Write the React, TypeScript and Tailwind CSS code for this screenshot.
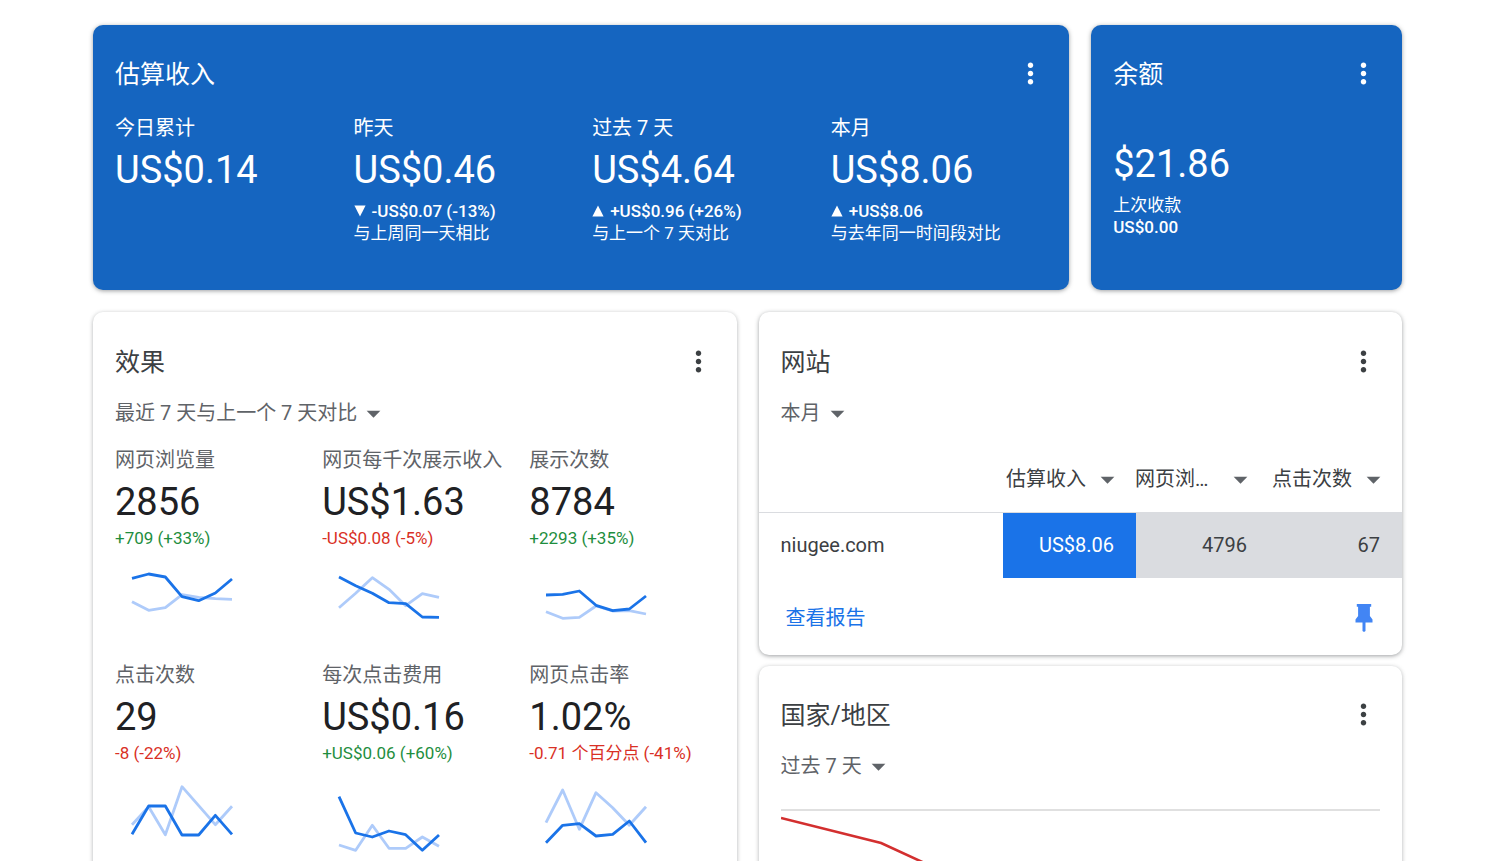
// src/App.tsx
import React, { useState } from 'react';
import { MdArrowDropDown, MdMoreVert } from 'react-icons/md';

interface Earning {
  label: string;
  value: string;
  trend?: 'up' | 'down';
  delta?: string;
  note?: string;
}

interface Metric {
  label: string;
  value: string;
  delta: string;
  good: boolean;
  current: number[];
  previous: number[];
}

const earnings: Earning[] = [
  { label: '今日累计', value: 'US$0.14' },
  { label: '昨天', value: 'US$0.46', trend: 'down', delta: '-US$0.07 (-13%)', note: '与上周同一天相比' },
  { label: '过去 7 天', value: 'US$4.64', trend: 'up', delta: '+US$0.96 (+26%)', note: '与上一个 7 天对比' },
  { label: '本月', value: 'US$8.06', trend: 'up', delta: '+US$8.06', note: '与去年同一时间段对比' },
];

const metrics: Metric[] = [
  { label: '网页浏览量', value: '2856', delta: '+709 (+33%)', good: true, current: [18.3, 14, 17, 36.7, 40.7, 33, 19], previous: [41.7, 50.3, 47.7, 34.7, 37.3, 38.7, 39.3] },
  { label: '网页每千次展示收入', value: 'US$1.63', delta: '-US$0.08 (-5%)', good: false, current: [17, 25.7, 33.3, 42.7, 43.7, 57, 57.3], previous: [47.7, 33.3, 17.7, 29.3, 45.7, 33.7, 37.3] },
  { label: '展示次数', value: '8784', delta: '+2293 (+35%)', good: true, current: [35, 34.3, 31, 45.3, 50.7, 49, 36], previous: [51.7, 58.3, 57.3, 46, 51, 50.7, 54] },
  { label: '点击次数', value: '29', delta: '-8 (-22%)', good: false, current: [59.3, 31, 31, 60, 60, 40.3, 59.3], previous: [49.7, 31.7, 59.7, 11.7, 30.7, 49.7, 31.3] },
  { label: '每次点击费用', value: 'US$0.16', delta: '+US$0.06 (+60%)', good: true, current: [21.7, 58, 62, 56, 59.7, 75.3, 60], previous: [70, 75.3, 50.3, 73.3, 73.3, 62, 71.3] },
  { label: '网页点击率', value: '1.02%', delta: '-0.71 个百分点 (-41%)', good: false, current: [67.7, 50.3, 48.7, 61, 59.3, 46, 67.7], previous: [47.7, 15, 54.3, 17.7, 32.7, 50.3, 31.7] },
];

const columns = ['估算收入', '网页浏览量', '点击次数'];

const toPoints = (values: number[]) =>
  values.map((y, i) => `${2 + (i * 100) / 6},${y}`).join(' ');

const Sparkline: React.FC<{ current: number[]; previous: number[] }> = ({ current, previous }) => (
  <svg width="104" height="80" viewBox="0 0 104 80" fill="none" strokeWidth="2.8" strokeLinejoin="round" aria-hidden="true">
    <polyline points={toPoints(previous)} stroke="#aecbfa" />
    <polyline points={toPoints(current)} stroke="#1a73e8" />
  </svg>
);

const CardHeader: React.FC<{ title: string }> = ({ title }) => (
  <div className="flex items-start justify-between pr-[22px]">
    <h2 className="text-[25px] leading-9">{title}</h2>
    <button type="button" aria-label={`${title} 菜单`} className="cursor-pointer">
      <MdMoreVert size={33} />
    </button>
  </div>
);

const Dropdown: React.FC<{ label: string; options: string[] }> = ({ label, options }) => {
  const [value, setValue] = useState(options[0]);
  return (
    <div className="relative inline-flex items-center text-[#5f6368]">
      <select
        aria-label={label}
        value={value}
        onChange={(e) => setValue(e.target.value)}
        className="h-6 cursor-pointer appearance-none bg-transparent pr-[33px] text-[20px] leading-6 [field-sizing:content]"
      >
        {options.map((option) => (
          <option key={option}>{option}</option>
        ))}
      </select>
      <MdArrowDropDown size={33} className="pointer-events-none absolute right-0" />
    </div>
  );
};

const ColumnSelect: React.FC<{ initial: string }> = ({ initial }) => {
  const [value, setValue] = useState(initial);
  return (
    <div className="relative flex items-center justify-end">
      <select
        aria-label="指标"
        value={value}
        onChange={(e) => setValue(e.target.value)}
        className="h-6 max-w-[122px] cursor-pointer appearance-none truncate bg-transparent pr-[38px] text-[20px] leading-6 [field-sizing:content]"
      >
        {columns.map((option) => (
          <option key={option}>{option}</option>
        ))}
      </select>
      <MdArrowDropDown size={33} className="pointer-events-none absolute right-0 text-[#5f6368]" />
    </div>
  );
};

const App: React.FC = () => {
  return (
    <div
      lang="zh-CN"
      className="h-screen overflow-y-auto bg-white pt-[25px] pr-[98px] pb-8 pl-[93px] font-['Roboto','Noto_Sans_CJK_SC',sans-serif] text-[#3c4043] [scrollbar-width:none]"
    >
      <div className="grid grid-cols-4 gap-[22px]">
        {/* Estimated earnings */}
        <section className="col-span-3 rounded-[10px] bg-[#1565c0] pt-8 pb-[46px] pl-[22px] text-white shadow-[0_1px_4px_rgba(60,64,67,0.5)]">
          <CardHeader title="估算收入" />
          <div className="mt-[23px] grid grid-cols-4">
            {earnings.map((item) => (
              <div key={item.label}>
                <div className="text-[20px] leading-6">{item.label}</div>
                <div className="mt-1.5 text-[38px] leading-[48px]">{item.value}</div>
                {item.delta && (
                  <div className="mt-1.5 text-[17px] leading-[22px]">
                    <div className="flex items-center gap-1.5 font-medium">
                      <svg width="12" height="12" viewBox="0 0 12 12" fill="currentColor" aria-hidden="true">
                        <path d={item.trend === 'up' ? 'M6 0.5l5.6 11H0.4z' : 'M0.4 0.5h11.2L6 11.5z'} />
                      </svg>
                      <span>{item.delta}</span>
                    </div>
                    <div>{item.note}</div>
                  </div>
                )}
              </div>
            ))}
          </div>
        </section>

        {/* Balance */}
        <section className="rounded-[10px] bg-[#1565c0] pt-8 pl-[22px] text-white shadow-[0_1px_4px_rgba(60,64,67,0.5)]">
          <CardHeader title="余额" />
          <div className="mt-[47px] text-[38px] leading-[48px]">$21.86</div>
          <div className="mt-1.5 text-[17px] leading-[22px]">
            <div>上次收款</div>
            <div className="font-medium">US$0.00</div>
          </div>
        </section>

        {/* Performance */}
        <section className="col-span-2 rounded-[10px] bg-white pt-[33px] pb-10 pl-[22px] shadow-[0_1px_4px_rgba(60,64,67,0.4)]">
          <CardHeader title="效果" />
          <div className="mt-5 flex">
            <Dropdown label="效果时间段" options={['最近 7 天与上一个 7 天对比', '本月']} />
          </div>
          <div className="mt-[23px] grid grid-cols-3 gap-y-[23px]">
            {metrics.map((metric) => (
              <div key={metric.label}>
                <div className="text-[20px] leading-6 whitespace-nowrap text-[#5f6368]">{metric.label}</div>
                <div className="mt-1.5 text-[38px] leading-[48px] text-[#202124]">{metric.value}</div>
                <div className={`text-[17px] leading-6 ${metric.good ? 'text-[#1e8e3e]' : 'text-[#d93025]'}`}>
                  {metric.delta}
                </div>
                <div className="mt-2.5 pl-[15px]">
                  <Sparkline current={metric.current} previous={metric.previous} />
                </div>
              </div>
            ))}
          </div>
        </section>

        <div className="col-span-2 flex flex-col gap-[11px]">
          {/* Sites */}
          <section className="rounded-[10px] bg-white pt-[33px] pb-5 shadow-[0_1px_4px_rgba(60,64,67,0.5)]">
            <div className="pl-[22px]">
              <CardHeader title="网站" />
              <div className="mt-5 flex">
                <Dropdown label="网站时间段" options={['本月', '过去 7 天']} />
              </div>
            </div>
            <table className="mt-[22px] w-full table-fixed border-collapse text-[20px] leading-6">
              <thead>
                <tr className="h-[65px] border-b border-[#dadce0]">
                  <td />
                  {columns.map((column) => (
                    <th key={column} scope="col" className="w-[133px] pr-3 font-normal">
                      <ColumnSelect initial={column} />
                    </th>
                  ))}
                </tr>
              </thead>
              <tbody>
                <tr className="h-[66px] text-right">
                  <th scope="row" className="pl-[22px] text-left font-normal">niugee.com</th>
                  <td className="bg-[#1a73e8] pr-[22px] text-white">US$8.06</td>
                  <td className="bg-[#dadce0] pr-[22px]">4796</td>
                  <td className="bg-[#dadce0] pr-[22px]">67</td>
                </tr>
              </tbody>
            </table>
            <div className="mt-[23px] flex items-center justify-between pr-[22px] pl-[27px]">
              <a href="#report" className="text-[20px] leading-6 text-[#1a73e8]">查看报告</a>
              <button type="button" aria-label="固定" className="flex w-[33px] cursor-pointer justify-center text-[#4285f4]">
                <svg width="18" height="34" viewBox="0 0 18 34" fill="currentColor" aria-hidden="true">
                  <path d="M1.8 3h14.4v2.800h-1.300v9.200l2.600 3.400v3.200H10.500V30L9 31l-1.500-1v-8.400H0.500v-3.200L3.100 15V5.800H1.800z" />
                </svg>
              </button>
            </div>
          </section>

          {/* Countries */}
          <section className="rounded-[10px] bg-white pt-8 pb-8 pl-[22px] shadow-[0_1px_4px_rgba(60,64,67,0.4)]">
            <CardHeader title="国家/地区" />
            <div className="mt-5 flex">
              <Dropdown label="国家/地区时间段" options={['过去 7 天', '本月']} />
            </div>
            <div className="mt-[31px] pr-[22px]">
              <svg className="w-full border-t-2 border-[#e0e0e0]" viewBox="0 0 599 160" fill="none" aria-hidden="true">
                <polyline
                  points="0,7 100,32 200,78 300,96 400,120 500,104 599,88"
                  stroke="#d32f2f"
                  strokeWidth="2.6"
                />
              </svg>
            </div>
          </section>
        </div>
      </div>
    </div>
  );
};

export default App;
